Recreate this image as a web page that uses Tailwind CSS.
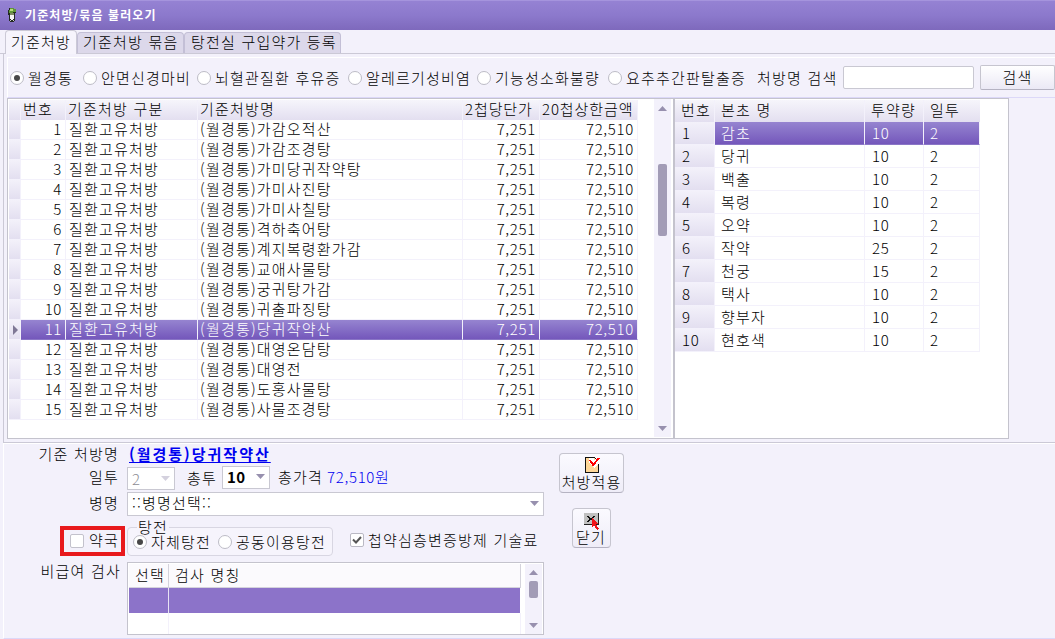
<!DOCTYPE html>
<html lang="ko">
	<head>
		<meta charset="UTF-8" />
		<meta name="viewport" content="width=device-width, initial-scale=1.0" />
		<title>기준처방/묶음 불러오기</title>
		<!-- Tailwind CSS -->
		<script src="https://cdn.jsdelivr.net/npm/@tailwindcss/browser@4"></script>
	</head>
	<body
		class="w-[1055px] h-[639px] overflow-hidden flex flex-col bg-[#f3f1fb] text-black text-[15px] leading-5 tracking-[1.2px] font-light whitespace-nowrap font-['Noto_Sans_CJK_KR',sans-serif]">
		<!-- title bar -->
		<header
			class="h-[30px] shrink-0 flex items-center pl-[7px] pb-[2px] gap-[8px] border-t border-[#a594dd] bg-linear-to-b from-[#9582d3] via-[#8c79cc] to-[#7e69bc] text-white">
			<svg class="w-[10px] h-4" viewBox="0 0 10 16" shape-rendering="crispEdges">
				<path d="M2 1h5v1h2v4H8v8H7v1H3v-1H2V8H1V3h1z" fill="#222a20" />
				<path d="M3 1h4v1h2v3H6v1H2V3h1z" fill="#5f9638" />
				<path d="M3 2h3v2H3z" fill="#b8dc7c" />
				<path d="M3 6h4v2H3z" fill="#7d8a62" />
				<path d="M3 8h4v4H6v1H4v-1H3z" fill="#f4f4f4" />
				<path d="M3 13h1v1H3zM6 13h1v1H6z" fill="#ccc" />
			</svg>
			<h1 class="text-[12px] leading-4 font-bold tracking-[1.1px]">기준처방/묶음 불러오기</h1>
		</header>

		<!-- tabs -->
		<nav class="h-[24px] shrink-0 flex items-end pl-[5px] border-b border-[#cbc9d6]">
			<a class="w-[72px] h-[24px] -mb-px pt-px pl-[5px] rounded-t-sm border border-b-0 border-[#cbc9d6] bg-[#f6f4fc]">기준처방</a>
			<a class="w-[107px] h-[21px] pl-[5px] leading-[18px] rounded-t-sm border border-b-0 border-[#c3bfd6] bg-[#dcd8ea]">기준처방 묶음</a>
			<a class="w-[157px] h-[21px] pl-[6px] leading-[18px] rounded-t-sm border border-b-0 border-[#c3bfd6] bg-[#dcd8ea]">탕전실 구입약가 등록</a>
		</nav>

		<div class="h-[389px] shrink-0 ml-[3px] pl-[3px] pt-[3px] border-l border-b border-[#cbc9d6]">
			<!-- disease filter + search -->
			<form class="h-[41px] flex items-center border-t border-l border-white border-b border-b-[#dcd8f8] pl-[2px]">
				<div id="filters" class="flex"></div>
				<label for="search" class="w-[86px]">처방명 검색</label>
				<input id="search" class="w-[131px] h-[23px] border border-[#c9c8d2] rounded-xs bg-white" />
				<button type="button" class="ml-[6px] w-[75px] h-[25px] pb-[2px] border border-[#c6c5cf] border-b-[#b5b3c2] rounded-xs bg-linear-to-b from-white to-[#ebe9f5]">검색</button>
			</form>

			<div class="flex h-[341px]">
				<!-- prescriptions -->
				<section class="w-[666px] flex border border-[#c4c3cd] border-r-0 bg-white pl-px pt-px">
					<div class="w-[629px]">
						<div class="grid grid-cols-[12px_45px_132px_265px_77px_98px] h-[20px] leading-[18px] bg-linear-to-b from-[#f6f5fb] to-[#e3dff0]">
							<span class="border-r border-[#f3f1fb]"></span>
							<span class="border-r border-[#f3f1fb] pl-[2px]">번호</span>
							<span class="border-r border-[#f3f1fb] pl-[2px]">기준처방 구분</span>
							<span class="border-r border-[#f3f1fb] pl-[2px]">기준처방명</span>
							<span class="border-r border-[#f3f1fb] pl-[2px] tracking-[0.9px]">2첩당단가</span>
							<span class="border-r border-[#f3f1fb] pl-[2px] tracking-[0.9px]">20첩상한금액</span>
						</div>
						<div id="rx"></div>
					</div>
					<div class="ml-[16px] w-[17px] h-full bg-[#f3f1fb] flex flex-col items-center pt-[6px] pb-[6px] -mt-px">
						<svg class="w-[9px] h-[5px] mt-px" viewBox="0 0 9 5"><path d="M4.500 0L9 5H0z" fill="#9790ae" /></svg>
						<div class="mt-[53px] w-[9px] h-[72px] rounded-xs bg-[#a29cb6]"></div>
						<svg class="w-[9px] h-[5px] mt-auto" viewBox="0 0 9 5"><path d="M0 0h9L4.500 5z" fill="#9790ae" /></svg>
					</div>
				</section>

				<!-- herbs of the selected prescription -->
				<section class="w-[336px] border border-l-2 border-[#c4c3cd] bg-white pt-px">
					<div class="w-[305px]">
						<div class="grid grid-cols-[40px_150px_59px_56px] h-[22px] leading-5 bg-linear-to-b from-[#f6f5fb] to-[#e3dff0]">
							<span class="border-r border-[#f3f1fb] pl-[6px]">번호</span>
							<span class="border-r border-[#f3f1fb] pl-[6px]">본초 명</span>
							<span class="border-r border-[#f3f1fb] pl-[6px]">투약량</span>
							<span class="pl-[6px]">일투</span>
						</div>
						<div id="herbs"></div>
					</div>
				</section>
			</div>
		</div>

		<!-- details -->
		<main class="flex h-[196px] ml-[3px] border-l border-t border-white border-b border-b-[#dcd8f8]">
			<div class="w-[540px] grid grid-cols-[115px_1fr] grid-rows-[22px_25px_26px_45px_74px] gap-x-[8px]">
				<span class="text-right leading-[20px]">기준 처방명</span>
				<a class="font-bold text-[#0000f0] underline underline-offset-2 decoration-1 leading-[20px] tracking-[2px] pl-[2px]"><span>(월경통)당귀작약산</span></a>

				<span class="text-right leading-[22px]">일투</span>
				<div class="flex items-center">
					<span class="w-[48px] h-[23px] flex items-center justify-between px-[4px] border border-[#c9c8d2] bg-white text-[#8d8d93]">2
						<svg class="w-[9px] h-[5px]" viewBox="0 0 9 5"><path d="M0 0h9L4.500 5z" fill="#d4d1de" /></svg>
					</span>
					<span class="ml-[12px] w-[35px] -mt-[2px]">총투</span>
					<span class="w-[48px] h-[23px] -mt-[2px] pb-[2px] flex items-center justify-between px-[4px] border border-[#c9c8d2] bg-white font-bold tracking-[0.3px]">10
						<svg class="w-[9px] h-[5px]" viewBox="0 0 9 5"><path d="M0 0h9L4.500 5z" fill="#9790ae" /></svg>
					</span>
					<span class="ml-[8px] w-[49px] -mt-[4px]">총가격</span>
					<span class="text-[#0000f0] tracking-[0.7px] -mt-[4px]">72,510원</span>
				</div>

				<span class="text-right leading-[24px]">병명</span>
				<div class="h-[24px] mt-px flex items-center justify-between px-[4px] pb-[2px] border border-[#c9c8d2] bg-white">::병명선택::
					<svg class="w-[9px] h-[5px]" viewBox="0 0 9 5"><path d="M0 0h9L4.500 5z" fill="#9790ae" /></svg>
				</div>

				<!-- highlighted pharmacy checkbox -->
				<label class="ml-[56px] mt-[9px] w-[65px] h-[30px] flex items-center gap-[5px] border-4 border-[#e8191c] pl-[6px]">
					<span class="w-[14px] h-[14px] border border-[#c3c2cc] rounded-xs bg-white"></span><span class="-mt-[2px]">약국</span>
				</label>
				<div class="flex">
					<fieldset class="relative mt-[10px] w-[206px] h-[29px] border border-[#d8d6e2] rounded-sm flex items-center pl-[5px] bg-[#f6f4fc]">
						<span class="absolute left-[9px] -top-[9px] px-px leading-[16px] h-[14px] bg-[#f5f3fc]">탕전</span>
						<label class="relative flex items-center w-[85px] gap-[4px]">
							<span class="w-[14px] h-[14px] rounded-full border border-[#bdbcc6] bg-white flex items-center justify-center"><span class="w-[6px] h-[6px] rounded-full bg-[#484848]"></span></span><span class="leading-[15px]">자체탕전</span>
						</label>
						<label class="relative flex items-center gap-[4px]">
							<span class="w-[14px] h-[14px] rounded-full border border-[#bdbcc6] bg-white"></span><span class="leading-[15px]">공동이용탕전</span>
						</label>
					</fieldset>
					<label class="ml-[17px] mt-[9px] h-[28px] flex items-center gap-[4px]">
						<span class="w-[14px] h-[14px] border border-[#bab9c4] rounded-xs bg-white flex items-center justify-center">
							<svg class="w-[10px] h-[8px]" viewBox="0 0 10 8"><path d="M1 3.500L4 6.500L9 1" fill="none" stroke="#555" stroke-width="2" /></svg>
						</span>첩약심층변증방제 기술료
					</label>
				</div>

				<span class="text-right leading-[18px] -mr-[2px]">비급여 검사</span>
				<div class="h-[73px] flex border border-[#c4c3cd] bg-white pl-px pt-px">
					<div class="w-[392px] grid grid-cols-[40px_1fr] grid-rows-[24px_25px_21px]">
						<span class="bg-[#fbfafd] border-r border-b border-[#d4d3dc] pl-[6px] leading-[22px]">선택</span>
						<span class="bg-[#fbfafd] border-r border-b border-[#d4d3dc] pl-[6px] leading-[22px]">검사 명칭</span>
						<span class="bg-[#8c73c9] border-r border-[#e8e3f4]"></span>
						<span class="bg-[#8c73c9] mr-px"></span>
						<span class="border-r border-[#f3f1fb]"></span>
						<span class="border-r border-[#f3f1fb]"></span>
					</div>
					<div class="ml-[4px] w-[17px] flex flex-col items-center bg-[#f3f1fb] py-[6px]">
						<svg class="w-[9px] h-[5px]" viewBox="0 0 9 5"><path d="M4.500 0L9 5H0z" fill="#9790ae" /></svg>
						<div class="mt-[6px] w-[9px] h-[17px] rounded-xs bg-[#a29cb6]"></div>
						<svg class="w-[9px] h-[5px] mt-auto" viewBox="0 0 9 5"><path d="M0 0h9L4.500 5z" fill="#9790ae" /></svg>
					</div>
				</div>
			</div>

			<!-- actions -->
			<div class="w-[65px] ml-[15px] pt-[9px] flex flex-col items-center gap-[15px]">
				<button class="w-[65px] h-[40px] pt-[2px] flex flex-col items-center border border-[#c6c5cf] border-b-[#b5b3c2] rounded-sm bg-linear-to-b from-[#fbfaff] to-[#efedf8]">
					<svg class="w-[16px] h-[18px] shrink-0" viewBox="0 0 16 18" shape-rendering="crispEdges">
						<path d="M1.500 1.500h9l4 4v11h-13z" fill="#ffd798" stroke="#111" />
						<path d="M5 2h5v2l4-2h2v4l-6 6-5-5z" fill="#fff" />
						<path d="M6 4l3 5 6-7" fill="none" stroke="#f00" stroke-width="2" />
						<path d="M14 8h1v9h-1z" fill="#111" />
					</svg>
					<span class="leading-[15px] tracking-[1.1px]">처방적용</span>
				</button>
				<button class="w-[39px] h-[40px] -ml-px pt-[3px] flex flex-col items-center border border-[#c6c5cf] border-b-[#b5b3c2] rounded-sm bg-linear-to-b from-[#fbfaff] to-[#efedf8]">
					<svg class="w-[17px] h-[18px] shrink-0" viewBox="0 0 17 18" shape-rendering="crispEdges">
						<path d="M1 1h14v12H1z" fill="#c0c0c0" />
						<path d="M0 13h16V1h-1v11H1z" fill="#222" />
						<path d="M4 4h2v1h1v1h1v2H7v1H6v1H4V9h1V8h1V6H5V5H4zM12 4h-2v1H9v1H8v2h1v1h1v1h2V9h-1V8h-1V6h1V5h1z" fill="#111" />
						<path d="M9 6l7 6h-3l3 5-2 1-3-5-2 2z" fill="#f01218" />
					</svg>
					<span class="leading-[14px]">닫기</span>
				</button>
			</div>
		</main>

		<script>
			const filters = [
				["월경통", 73],
				["안면신경마비", 114],
				["뇌혈관질환 후유증", 151],
				["알레르기성비염", 129],
				["기능성소화불량", 131],
				["요추추간판탈출증", 149],
			];
			document.getElementById("filters").innerHTML = filters
				.map(
					([name, width], i) => `
				<label class="flex items-center gap-[4px]" style="width:${width}px">
					<span class="w-[14px] h-[14px] rounded-full border border-[#bdbcc6] bg-white flex items-center justify-center">
						${i === 0 ? '<span class="w-[6px] h-[6px] rounded-full bg-[#484848]"></span>' : ""}
					</span>${name}
				</label>`
				)
				.join("");

			const prescriptions = [
				"가감오적산", "가감조경탕", "가미당귀작약탕", "가미사진탕", "가미사칠탕",
				"격하축어탕", "계지복령환가감", "교애사물탕", "궁귀탕가감", "귀출파징탕",
				"당귀작약산", "대영온담탕", "대영전", "도홍사물탕", "사물조경탕",
			];
			document.getElementById("rx").innerHTML = prescriptions
				.map((name, i) => {
					const active = i === 10;
					const cell = active
						? "border-r border-b border-r-[#f3f1fb] border-b-[#8a76c6] bg-linear-to-b from-[#9684d0] to-[#7457bb] text-white"
						: "border-r border-b border-[#f3f1fb]";
					return `
				<div class="grid grid-cols-[12px_45px_132px_265px_77px_98px] h-[20px] leading-[18px]">
					<span class="border-r border-b border-[#f3f1fb] bg-linear-to-b from-[#f3f1fa] to-[#e3dff0] flex items-center justify-end">
						${active ? '<svg class="w-[5px] h-[10px] mr-[2px]" viewBox="0 0 5 10"><path d="M0 0l5 5-5 5z" fill="#7f7896" /></svg>' : ""}
					</span>
					<span class="${cell} text-right pr-[3px] tracking-[0.6px]">${i + 1}</span>
					<span class="${cell} pl-[3px]">질환고유처방</span>
					<span class="${cell} pl-[2px]">(월경통)${name}</span>
					<span class="${cell} text-right pr-[3px] tracking-[0.7px]">7,251</span>
					<span class="${cell} text-right pr-[3px] tracking-[0.7px]">72,510</span>
				</div>`;
				})
				.join("");

			const herbs = [
				["감초", 10], ["당귀", 10], ["백출", 10], ["복령", 10], ["오약", 10],
				["작약", 25], ["천궁", 15], ["택사", 10], ["향부자", 10], ["현호색", 10],
			];
			document.getElementById("herbs").innerHTML = herbs
				.map(([name, amount], i) => {
					const cell =
						i === 0
							? "border-r border-b border-r-[#f3f1fb] border-b-[#8a76c6] bg-linear-to-b from-[#9684d0] to-[#7457bb] text-white"
							: "border-r border-b border-[#f3f1fb]";
					return `
				<div class="grid grid-cols-[40px_150px_59px_56px] h-[23px] leading-[22px]">
					<span class="border-r border-b border-[#f3f1fb] bg-linear-to-b from-[#f3f1fa] to-[#e3dff0] pl-[7px] tracking-[0.6px]">${i + 1}</span>
					<span class="${cell} pl-[6px]">${name}</span>
					<span class="${cell} pl-[7px] tracking-[0.6px]">${amount}</span>
					<span class="${cell} pl-[6px] tracking-[0.6px]">2</span>
				</div>`;
				})
				.join("");
		</script>
	</body>
</html>
